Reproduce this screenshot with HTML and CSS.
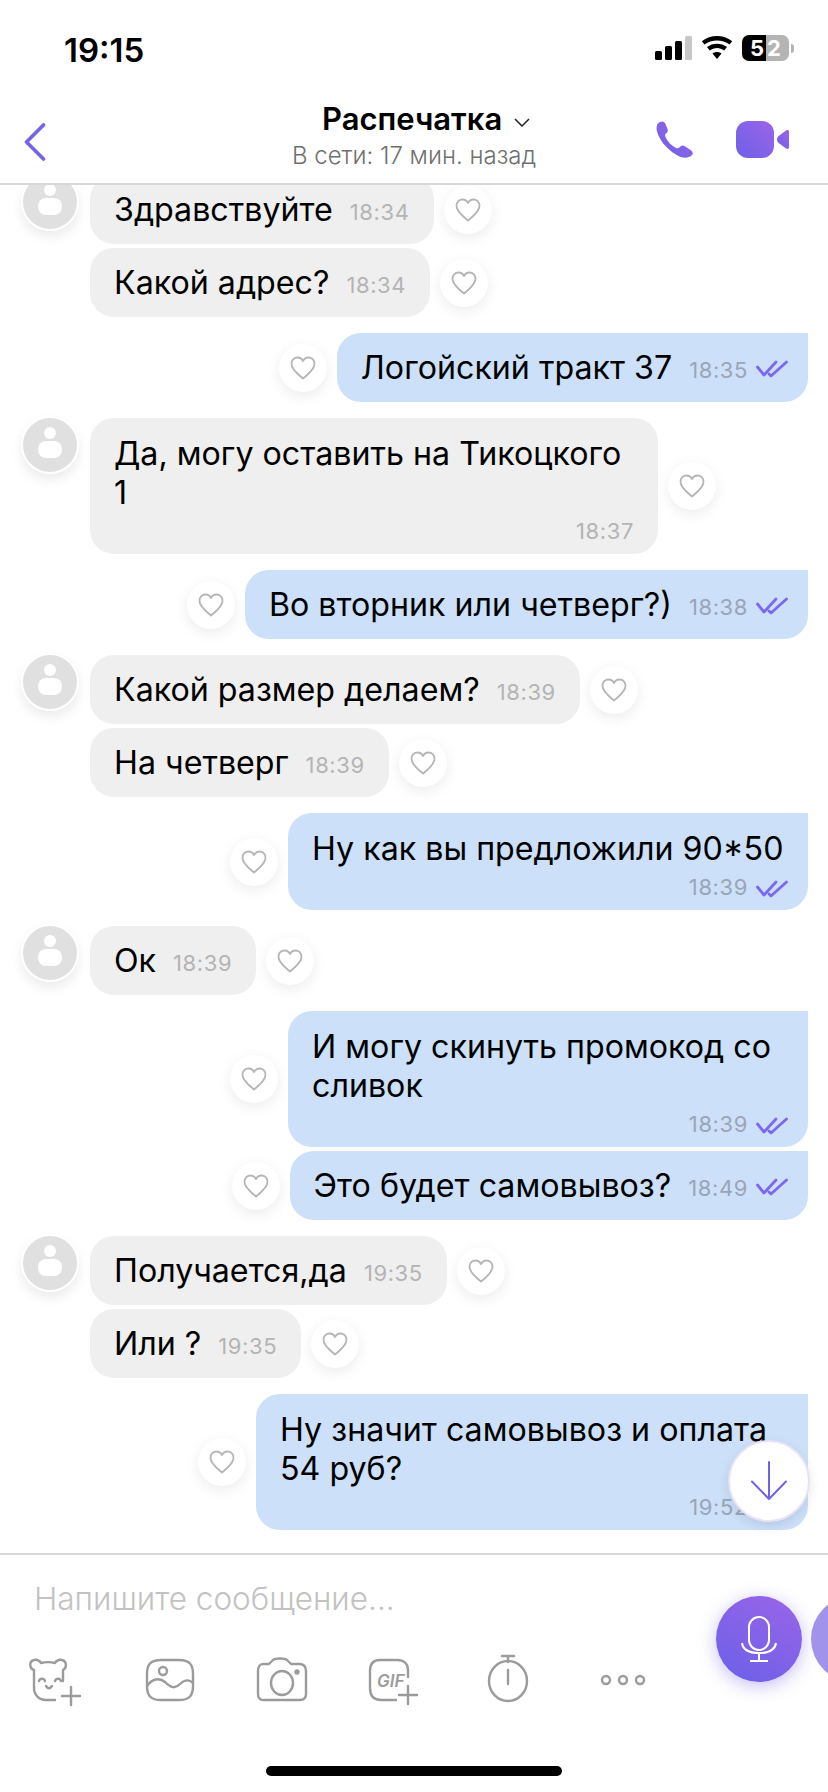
FILE: index.html
```html
<!DOCTYPE html>
<html lang="ru">
<head>
  <meta charset="UTF-8" />
  <title>Распечатка</title>
  <link rel="stylesheet" href="styles.css">
</head>
<body>
  <svg class="defs">
    <defs>
      <symbol id="heart" viewBox="0 0 26 24"><path d="M13 22.500C9 19 1.500 14 1.500 7.800C1.500 4 4.300 1.500 7.500 1.500C10 1.500 12 3 13 5C14 3 16 1.500 18.500 1.500C21.700 1.500 24.500 4 24.500 7.800C24.500 14 17 19 13 22.500Z" fill="none" stroke="#b5b5b5" stroke-width="1.800" stroke-linejoin="round"/></symbol>
      <symbol id="ticks" viewBox="0 0 32 18"><path d="M1.500 7L8 15L20 2M13 14L15 16L30.500 2" fill="none" stroke="#7c68ee" stroke-width="2.800" stroke-linecap="round" stroke-linejoin="round"/></symbol>
      <symbol id="person" viewBox="0 0 58 58"><circle cx="29" cy="29" r="28" fill="#e0e0e0" stroke="#fff" stroke-width="2"/><circle cx="29" cy="17" r="6" fill="#fff"/><rect x="17" y="25" width="24" height="17" rx="8" fill="#fff"/></symbol>
      <linearGradient id="brand" x1="0" y1="1" x2="1" y2="0"><stop offset="0" stop-color="#6e60e8"/><stop offset="1" stop-color="#9a65e8"/></linearGradient>
    </defs>
  </svg>

  <div class="status">
    <span class="clock">19:15</span>
    <div class="status-icons">
      <svg width="37" height="24" viewBox="0 0 37 24"><rect x="0" y="15" width="7" height="9" rx="1.500"/><rect x="10" y="10" width="7" height="14" rx="1.500"/><rect x="20" y="5" width="7" height="19" rx="1.500"/><rect x="30" y="0" width="7" height="24" rx="1.500" fill="#c8c8c8"/></svg>
      <svg width="32" height="24" viewBox="0 0 32 24"><path d="M16 23L11.500 17.500C14 15.500 18 15.500 20.500 17.500ZM8.800 14.500L6 11C11.500 6.500 20.500 6.500 26 11L23.200 14.500C19 11 13 11 8.800 14.500ZM3.500 8.500L.8 5.200C9.500 -1.700 22.500 -1.700 31.200 5.200L28.500 8.500C21.500 3 10.500 3 3.500 8.500Z"/></svg>
      <div class="battery"><span>5</span><span>2</span></div>
      <span class="battery-tip"></span>
    </div>
  </div>

  <header class="topbar">
    <svg class="back" width="22" height="38" viewBox="0 0 22 38"><path d="M19.500 2L2.500 19L19.500 36" fill="none" stroke="#7263e8" stroke-width="3.600" stroke-linecap="round" stroke-linejoin="round"/></svg>
    <div class="title-box">
      <div class="title">Распечатка <svg width="16" height="9" viewBox="0 0 16 9"><path d="M1 1L8 8L15 1" fill="none" stroke="#222" stroke-width="1.500"/></svg></div>
      <div class="subtitle">В сети: 17 мин. назад</div>
    </div>
    <div class="actions">
      <svg width="38" height="37" viewBox="0 0 38 37"><path d="M3 1.500C6 -.5 8.500 .5 9.500 3L11.500 8C12.300 10 11.500 11.500 10 12.500C9 13.200 8.800 14.500 9.500 16C11.500 20.500 15 24.500 20 27C21.500 27.800 23 27 23.800 26C25 24.500 27 24 28.500 25L34.500 29C36.800 30.500 37.500 32.500 36 34C32 38 26 37.500 20 33.500C10 27.500 3.500 19 1 10.500C0 6.500 .8 3 3 1.500Z" fill="url(#brand)"/></svg>
      <svg width="54" height="37" viewBox="0 0 54 37"><rect width="38" height="37" rx="12" fill="url(#brand)"/><path d="M41 18.500C41 16.500 42 15.500 44 14L50 9.500C51.500 8.500 53 9 53 11V26C53 28 51.500 28.500 50 27.500L44 23C42 21.500 41 20.500 41 18.500Z" fill="url(#brand)"/></svg>
    </div>
  </header>

  <main class="chat">
    <div class="row in first">
      <svg class="avatar"><use href="#person"/></svg>
      <div class="bubble line"><span class="text">Здравствуйте</span><span class="time">18:34</span></div>
      <span class="like"><svg><use href="#heart"/></svg></span>
    </div>
    <div class="row in next">
      <div class="bubble line"><span class="text">Какой адрес?</span><span class="time">18:34</span></div>
      <span class="like"><svg><use href="#heart"/></svg></span>
    </div>

    <div class="row out">
      <span class="like"><svg><use href="#heart"/></svg></span>
      <div class="bubble line"><span class="text">Логойский тракт 37</span><span class="time">18:35</span><svg class="ticks"><use href="#ticks"/></svg></div>
    </div>

    <div class="row in">
      <svg class="avatar"><use href="#person"/></svg>
      <div class="bubble wrap w-568"><div class="text">Да, могу оставить на Тикоцкого 1</div><div class="meta"><span class="time">18:37</span></div></div>
      <span class="like"><svg><use href="#heart"/></svg></span>
    </div>

    <div class="row out">
      <span class="like"><svg><use href="#heart"/></svg></span>
      <div class="bubble line"><span class="text">Во вторник или четверг?)</span><span class="time">18:38</span><svg class="ticks"><use href="#ticks"/></svg></div>
    </div>

    <div class="row in">
      <svg class="avatar"><use href="#person"/></svg>
      <div class="bubble line"><span class="text">Какой размер делаем?</span><span class="time">18:39</span></div>
      <span class="like"><svg><use href="#heart"/></svg></span>
    </div>
    <div class="row in next">
      <div class="bubble line"><span class="text">На четверг</span><span class="time">18:39</span></div>
      <span class="like"><svg><use href="#heart"/></svg></span>
    </div>

    <div class="row out">
      <span class="like"><svg><use href="#heart"/></svg></span>
      <div class="bubble wrap w-520"><div class="text">Ну как вы предложили 90*50</div><div class="meta"><span class="time">18:39</span><svg class="ticks"><use href="#ticks"/></svg></div></div>
    </div>

    <div class="row in">
      <svg class="avatar"><use href="#person"/></svg>
      <div class="bubble line"><span class="text">Ок</span><span class="time">18:39</span></div>
      <span class="like"><svg><use href="#heart"/></svg></span>
    </div>

    <div class="row out">
      <span class="like"><svg><use href="#heart"/></svg></span>
      <div class="bubble wrap w-520"><div class="text">И могу скинуть промокод со сливок</div><div class="meta"><span class="time">18:39</span><svg class="ticks"><use href="#ticks"/></svg></div></div>
    </div>
    <div class="row out next">
      <span class="like"><svg><use href="#heart"/></svg></span>
      <div class="bubble line"><span class="text">Это будет самовывоз?</span><span class="time">18:49</span><svg class="ticks"><use href="#ticks"/></svg></div>
    </div>

    <div class="row in">
      <svg class="avatar"><use href="#person"/></svg>
      <div class="bubble line"><span class="text">Получается,да</span><span class="time">19:35</span></div>
      <span class="like"><svg><use href="#heart"/></svg></span>
    </div>
    <div class="row in next">
      <div class="bubble line"><span class="text">Или ?</span><span class="time">19:35</span></div>
      <span class="like"><svg><use href="#heart"/></svg></span>
    </div>

    <div class="row out">
      <span class="like"><svg><use href="#heart"/></svg></span>
      <div class="bubble wrap w-552"><div class="text">Ну значит самовывоз и оплата 54 руб?</div><div class="meta"><span class="time">19:52</span><svg class="ticks"><use href="#ticks"/></svg></div></div>
    </div>

    <button class="scroll-down">
      <svg width="38" height="40" viewBox="0 0 38 40"><path d="M19 1V38M2 20.500L19 38L36 20.500" fill="none" stroke="#6f63e8" stroke-width="2" stroke-linecap="round" stroke-linejoin="round"/></svg>
    </button>
  </main>

  <footer class="composer">
    <div class="placeholder">Напишите сообщение...</div>
    <div class="tools">
      <svg class="tool" viewBox="0 0 60 50"><path d="M10 15C5 13 5 6 10 5C13 4 16 6 17 8C21 7 27 7 31 8C32 6 35 4 38 5C43 6 43 13 39 15V26M10 15V33C10 40 15 45 22 45H31" /><path d="M15 26C16 23 20 23 21 26M31 26C32 23 36 23 37 26M22 31C24 34 26 34 28 31"/><path d="M47 32V50M38 41H56"/></svg>
      <svg class="tool" viewBox="-6 0 60 50"><path d="M18 5H36C46 5 50 9 50 19V31C50 41 46 45 36 45H18C8 45 4 41 4 31V19C4 9 8 5 18 5Z"/><circle cx="20" cy="16" r="4"/><path d="M4 31C9 24 16 22 22 27C28 33 32 34 37 29C41 25 46 24 50 28"/></svg>
      <svg class="tool" viewBox="-3 0 60 50"><path d="M10 9H16L20 5C22 3 32 3 34 5L38 9H46C51 9 53 12 53 16V39C53 43 51 45 47 45H10C7 45 5 43 5 39V16C5 12 7 9 10 9Z"/><ellipse cx="29" cy="28" rx="11" ry="12"/><circle cx="44" cy="17" r="1.500" class="solid"/></svg>
      <svg class="tool" viewBox="0 0 60 50"><path d="M45 22V15C45 9 41 5 34 5H17C10 5 7 9 7 16V33C7 41 11 45 18 45H33"/><path d="M45 31V49M36 40H54"/><text x="14" y="32" class="gif">GIF</text></svg>
      <svg class="tool" viewBox="-2 0 60 50"><path d="M24 1H36M30 1V7"/><ellipse cx="30" cy="26" rx="19" ry="20"/><path d="M30 15V29"/></svg>
      <svg class="tool" viewBox="-4 0 60 50"><circle cx="13" cy="25" r="4"/><circle cx="30" cy="25" r="4"/><circle cx="47" cy="25" r="4"/></svg>
    </div>
    <button class="mic">
      <svg width="36" height="46" viewBox="0 0 36 46"><rect x="8" y="1" width="20" height="33" rx="10" fill="none" stroke="#fff" stroke-width="2"/><path d="M1 27C2 34 8 37 18 37C28 37 34 34 35 27M18 37V45M9 45H27" fill="none" stroke="#fff" stroke-width="2"/></svg>
    </button>
    <span class="send-ghost"></span>
    <div class="home-bar"></div>
  </footer>
</body>
</html>
```

FILE: styles.css
```css
:root {
  --in-bg: #efefef;
  --out-bg: #cce0fa;
  --brand: #7263e8;
  --time: #b4b4b4;
  --line: #d8d8d8;
}

* {
  box-sizing: border-box;
}

html, body {
  margin: 0;
  height: 1792px;
  overflow: hidden;
}

body {
  font-family: Inter, "Liberation Sans", sans-serif;
  color: #000;
  background: #fff;
  display: flex;
  flex-direction: column;
}

.defs {
  width: 0;
  height: 0;
  position: absolute;
}

/* status bar */
.status {
  height: 94px;
  padding: 34px 34px 0 64px;
  display: flex;
  justify-content: space-between;
  flex: none;
}

.clock {
  font-size: 33px;
  font-weight: 600;
  line-height: 32px;
}

.status-icons {
  display: flex;
  gap: 9px;
  height: 28px;
  align-items: center;
}

.battery {
  width: 47px;
  height: 26px;
  border-radius: 7px;
  background: linear-gradient(90deg, #000 52%, #b4b4b4 52%);
  color: #fff;
  font-size: 22px;
  font-weight: 700;
  line-height: 26px;
  display: flex;
  justify-content: center;
  gap: 3px;
}

.battery-tip {
  width: 3px;
  height: 9px;
  background: #b4b4b4;
  border-radius: 0 3px 3px 0;
  margin-left: -7px;
}

/* header */
.topbar {
  height: 91px;
  border-bottom: 2px solid var(--line);
  position: relative;
  display: flex;
  justify-content: space-between;
  padding: 0 38px 0 24px;
  flex: none;
}

.back {
  margin-top: 29px;
}

.title-box {
  position: absolute;
  left: 0;
  right: 0;
  top: 6px;
  text-align: center;
}

.title {
  font-size: 31px;
  font-weight: 600;
  line-height: 38px;
  padding-left: 24px;
}

.title svg {
  vertical-align: 3px;
  margin-left: 4px;
}

.subtitle {
  font-size: 24px;
  font-weight: 300;
  line-height: 30px;
  color: #6f6f6f;
  margin-top: 3px;
}

.actions {
  display: flex;
  gap: 42px;
  margin-top: 27px;
  position: relative;
}

.actions svg {
  display: block;
}

/* messages */
.chat {
  flex: 1;
  overflow: hidden;
  position: relative;
  padding: 0 20px 0 21px;
}

.row {
  display: flex;
  align-items: center;
  gap: 10px;
  margin-top: 16px;
}

.row.first {
  margin-top: -10px;
}

.row.next {
  margin-top: 4px;
}

.row.in {
  padding-left: 69px;
  position: relative;
}

.row.out {
  justify-content: flex-end;
}

.avatar {
  position: absolute;
  left: 0;
  top: -2px;
  width: 58px;
  height: 58px;
  border-radius: 50%;
  box-shadow: 0 6px 12px rgba(0, 0, 0, .08);
}

.bubble {
  border-radius: 24px;
  padding: 0 24px;
  font-size: 32.200px;
  line-height: 39px;
}

.in .bubble {
  background: var(--in-bg);
}

.out .bubble {
  background: var(--out-bg);
  border-radius: 24px 0 24px 24px;
  padding-right: 20px;
}

.bubble.line {
  height: 69px;
  display: flex;
  align-items: center;
  gap: 17px;
}

.bubble.wrap {
  padding-top: 16px;
  padding-bottom: 11px;
}

.out .wrap .text {
  margin-right: -8px;
}

.w-520 { width: 520px; }
.w-552 { width: 552px; }
.w-568 { width: 568px; }

.meta {
  display: flex;
  justify-content: flex-end;
  align-items: center;
  gap: 8px;
  margin-top: 7px;
  height: 24px;
}

.time {
  font-size: 22px;
  letter-spacing: .6px;
  line-height: 24px;
  color: var(--time);
  margin-top: 4px;
}

.meta .time {
  margin-top: 0;
}

.out .time {
  color: #9aa5b5;
}

.ticks {
  width: 32px;
  height: 18px;
  margin-left: -9px;
  margin-top: 3px;
  flex: none;
}

.meta .ticks {
  margin-left: 0;
}

.like {
  width: 48px;
  height: 48px;
  border-radius: 50%;
  background: #fff;
  box-shadow: 0 4px 14px rgba(0, 0, 0, .08);
  display: flex;
  align-items: center;
  justify-content: center;
  flex: none;
}

.like svg {
  width: 26px;
  height: 24px;
}

.scroll-down {
  position: absolute;
  left: 728px;
  bottom: 31px;
  width: 82px;
  height: 82px;
  border-radius: 50%;
  border: 2px solid #e8e2f6;
  background: #fff;
  padding: 0;
  box-shadow: 0 4px 12px rgba(0, 0, 0, .1);
  display: flex;
  align-items: center;
  justify-content: center;
}

/* composer */
.composer {
  height: 239px;
  flex: none;
  border-top: 2px solid var(--line);
  position: relative;
  padding-left: 34px;
  overflow: hidden;
}

.placeholder {
  font-size: 31.500px;
  font-weight: 300;
  line-height: 36px;
  color: #c2c2c2;
  margin-top: 26px;
}

.tools {
  display: flex;
  gap: 53px;
  margin: 38px 0 0 -10px;
}

.tool {
  width: 60px;
  height: 50px;
  fill: none;
  stroke: #9b9b9b;
  stroke-width: 2.400;
  stroke-linecap: round;
  stroke-linejoin: round;
  flex: none;
  overflow: visible;
}

.tool .solid {
  fill: #9b9b9b;
}

.gif {
  font-size: 17px;
  font-style: italic;
  font-weight: 600;
  fill: #9b9b9b;
  stroke: none;
}

.mic, .send-ghost {
  position: absolute;
  top: 41px;
  width: 86px;
  height: 86px;
  border-radius: 50%;
  border: none;
  padding: 0;
}

.mic {
  left: 716px;
  background: linear-gradient(30deg, #6a60e8, #9a65e8);
  box-shadow: 0 4px 18px rgba(115, 90, 230, .4);
  display: flex;
  align-items: center;
  justify-content: center;
}

.send-ghost {
  left: 811px;
  background: #a192ec;
}

.home-bar {
  position: absolute;
  left: 266px;
  top: 211px;
  width: 296px;
  height: 10px;
  border-radius: 5px;
  background: #000;
}
```
